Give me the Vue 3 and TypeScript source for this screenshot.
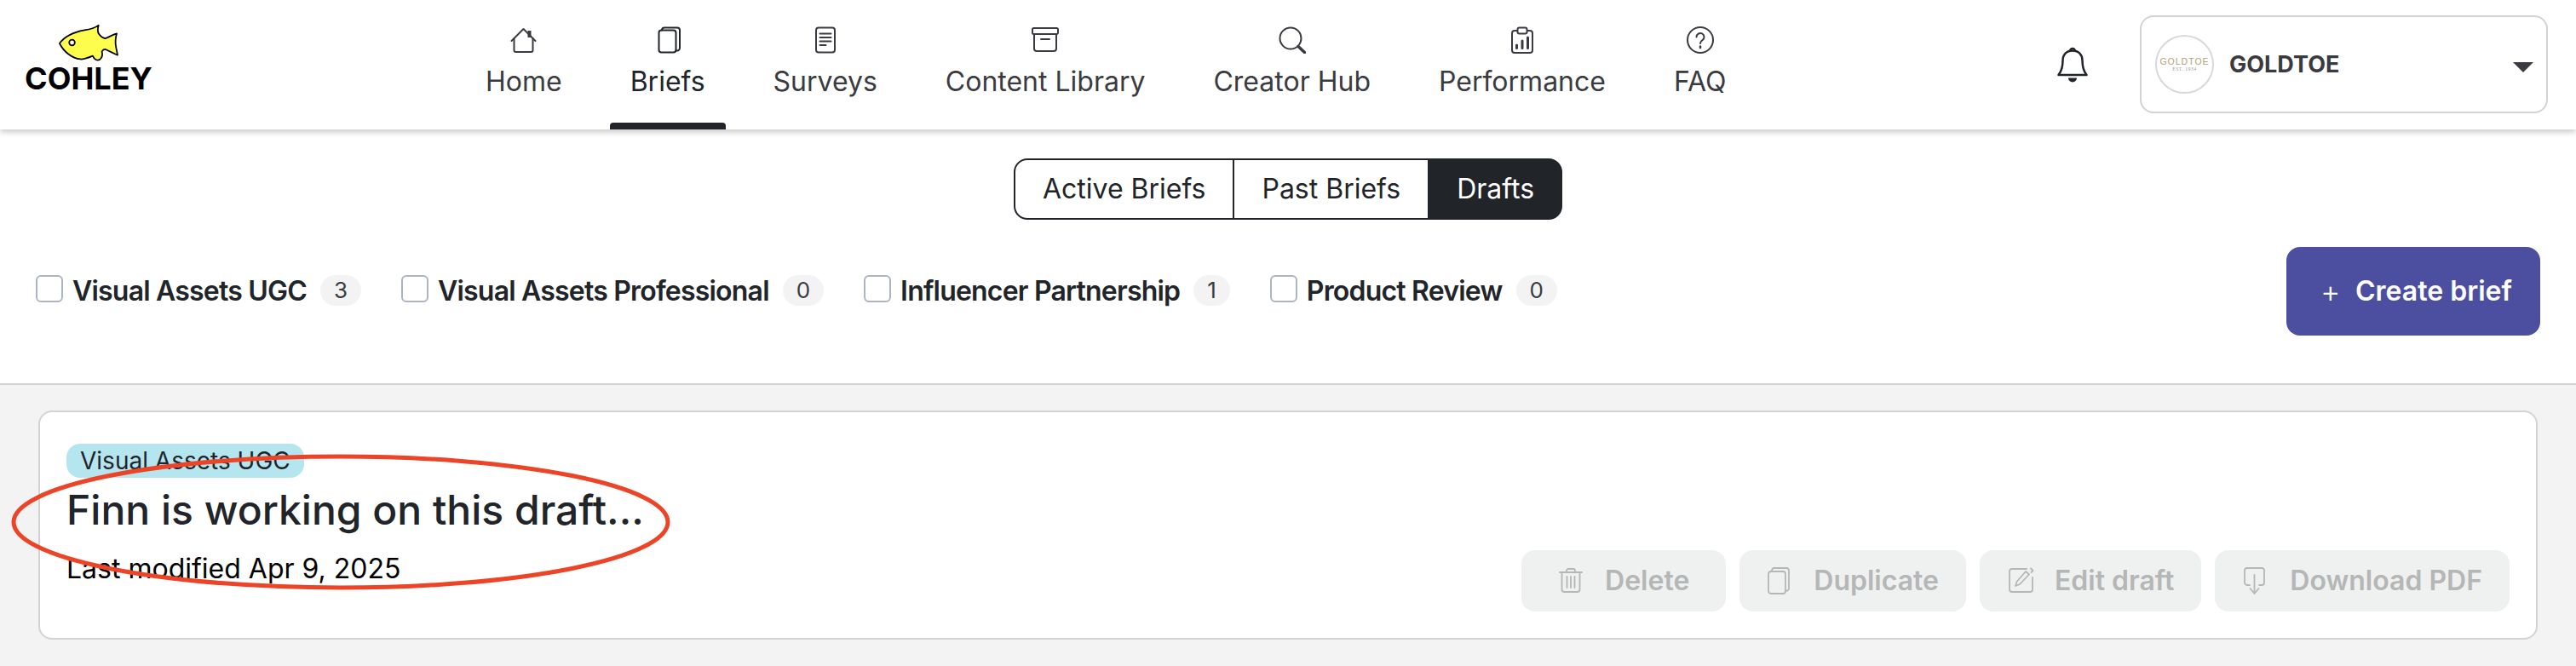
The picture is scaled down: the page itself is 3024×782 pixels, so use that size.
<script setup lang="ts">
interface IconPart { d: string; fill?: boolean; width?: number }
interface NavItem { label: string; active?: boolean; parts: IconPart[] }

const navItems: NavItem[] = [
  { label: 'Home', parts: [
    { d: 'M1.5 17 15.5 3l14 14' },
    { d: 'M4.5 14v14a2 2 0 0 0 2 2h18a2 2 0 0 0 2-2V14' },
    { d: 'M20.5 5h4v8h-4z', fill: true, width: 0 },
  ] },
  { label: 'Briefs', active: true, parts: [
    { d: 'M5.5 7.5a3 3 0 0 1 3-3h14a3 3 0 0 1 3 3v20a3 3 0 0 1-3 3h-14a3 3 0 0 1-3-3z' },
    { d: 'M9 4.5a3 3 0 0 1 3-3h15a3 3 0 0 1 3 3v21a3 3 0 0 1-4.5 2.5' },
  ] },
  { label: 'Surveys', parts: [
    { d: 'M5 4.5a3 3 0 0 1 3-3h16a3 3 0 0 1 3 3v23a3 3 0 0 1-3 3H8a3 3 0 0 1-3-3z' },
    { d: 'M9.5 8.5h13M9.5 13h13M9.5 17.5h13M9.5 22h7' },
  ] },
  { label: 'Content Library', parts: [
    { d: 'M2.5 2h27a1.5 1.5 0 0 1 1.5 1.5v4a1.5 1.5 0 0 1-1.5 1.5h-27A1.500 1.500 0 0 1 1 7.500v-4A1.500 1.500 0 0 1 2.500 2z' },
    { d: 'M3 9v17a3 3 0 0 0 3 3h20a3 3 0 0 0 3-3V9' },
    { d: 'M11 15h10' },
  ] },
  { label: 'Creator Hub', parts: [
    { d: 'M14 1.500a12.500 12.500 0 1 0 0 25 12.500 12.500 0 0 0 0-25z' },
    { d: 'M23 23.500l7.500 7', width: 3.5 },
  ] },
  { label: 'Performance', parts: [
    { d: 'M10 5H7a3 3 0 0 0-3 3v20a3 3 0 0 0 3 3h18a3 3 0 0 0 3-3V8a3 3 0 0 0-3-3h-3' },
    { d: 'M12.500 1.500h7a2 2 0 0 1 2 2v3a2 2 0 0 1-2 2h-7a2 2 0 0 1-2-2v-3a2 2 0 0 1 2-2z' },
    { d: 'M9.500 22v3.500M16 17v8.500M22.500 13v12.500', width: 3 },
  ] },
  { label: 'FAQ', parts: [
    { d: 'M16 1a15 15 0 1 0 0 30 15 15 0 0 0 0-30z' },
    { d: 'M11.500 12.500a4.500 4.500 0 1 1 7 3.700c-1.600 1-2.500 1.800-2.500 3.800' },
    { d: 'M16 23.500v1.500', width: 2.5 },
  ] },
]

const filters = [
  { label: 'Visual Assets UGC', count: 3 },
  { label: 'Visual Assets Professional', count: 0 },
  { label: 'Influencer Partnership', count: 1 },
  { label: 'Product Review', count: 0 },
]

const tabs = [
  { label: 'Active Briefs', active: false },
  { label: 'Past Briefs', active: false },
  { label: 'Drafts', active: true },
]

const actions: { label: string; cls: string; parts: string[] }[] = [
  { label: 'Delete', cls: 'del', parts: [
    'M1 6h26M9 6V4a2 2 0 0 1 2-2h6a2 2 0 0 1 2 2v2',
    'M3.500 6v20a3 3 0 0 0 3 3h15a3 3 0 0 0 3-3V6',
    'M9.500 11v13M14 11v13M18.500 11v13',
  ] },
  { label: 'Duplicate', cls: 'dup', parts: [
    'M1 8a3 3 0 0 1 3-3h14a3 3 0 0 1 3 3v20a3 3 0 0 1-3 3H4a3 3 0 0 1-3-3z',
    'M5 5V4a3 3 0 0 1 3-3h14a3 3 0 0 1 3 3v21a3 3 0 0 1-4 2.500',
  ] },
  { label: 'Edit draft', cls: 'edit', parts: [
    'M21 2H4a3 3 0 0 0-3 3v21a3 3 0 0 0 3 3h21a3 3 0 0 0 3-3V12',
    'M8 22l1.500-5L20 5l4 3.500L13 20z',
    'M26 1.500l2.500 2.500-2 2',
  ] },
  { label: 'Download PDF', cls: 'dl', parts: [
    'M7 21H4a3 3 0 0 1-3-3V4a3 3 0 0 1 3-3h17a3 3 0 0 1 3 3v14a3 3 0 0 1-3 3h-3',
    'M12.500 9v21M7.500 25l5 6 5-6',
  ] },
]
</script>

<template>
  <div class="page">
    <header class="topbar">
      <div class="logo">
        <svg class="fish" width="72" height="46" viewBox="68 28 74 46">
          <path d="M70 51C75 44 84 38 100 35C107 34 113 32 117 29C116 33 115.500 36 117 39C119 42 122 44.500 125 45C129 43.500 134 40.500 139 39C137.500 44 137 50 138 55C138.500 58 139.500 62 140 65C135 63 130 60.500 125 58C123.500 58 122 59 121 61C122 64 122 67 119 70C116 72.500 112 71 110 66C105 68 99 70.500 95 70C85 69 75 61 70 51Z" fill="#fdfd4e" stroke="#000" stroke-width="1.800" stroke-linejoin="round" />
          <circle cx="85" cy="50" r="3.400" fill="#fff" stroke="#000" stroke-width="1.800" />
        </svg>
        <span class="wordmark">COHLEY</span>
      </div>

      <nav class="nav">
        <a v-for="item in navItems" :key="item.label" class="nav-item" :class="{ active: item.active }">
          <svg width="32" height="32" viewBox="0 0 32 32" fill="none">
            <path
              v-for="part in item.parts"
              :key="part.d"
              :d="part.d"
              :fill="part.fill ? 'currentColor' : 'none'"
              stroke="currentColor"
              :stroke-width="part.width ?? 2"
              stroke-linecap="round"
              stroke-linejoin="round"
            />
          </svg>
          <span>{{ item.label }}</span>
        </a>
      </nav>

      <div class="account">
        <svg class="bell" width="36" height="42" viewBox="0 0 36 42" fill="none">
          <path d="M15 5a3 3 0 0 1 6 0" stroke="#212529" stroke-width="2.500" />
          <path d="M1.500 33C5.500 28 6.500 22 6.500 16C6.500 9 11 4.500 18 4.500C25 4.500 29.500 9 29.500 16C29.500 22 30.500 28 34.500 33Z" stroke="#212529" stroke-width="2.500" stroke-linejoin="round" />
          <path d="M13 36.500h10a5 5 0 0 1-10 0z" fill="#212529" />
        </svg>
        <div class="brand">
          <div class="avatar">
            <span class="avatar-name">GOLDTOE</span>
            <span class="avatar-est">EST. 1934</span>
          </div>
          <span class="brand-name">GOLDTOE</span>
          <svg class="caret" width="24" height="12" viewBox="0 0 24 12">
            <path d="M0 0h24L12 12z" fill="#3a3b40" />
          </svg>
        </div>
      </div>
    </header>

    <section class="controls">
      <div class="tabs">
        <button v-for="tab in tabs" :key="tab.label" class="tab" :class="{ on: tab.active }">{{ tab.label }}</button>
      </div>
      <div class="filter-row">
        <div class="filters">
          <label v-for="filter in filters" :key="filter.label" class="filter">
            <span class="check"></span>
            <span class="filter-label">{{ filter.label }}</span>
            <span class="count">{{ filter.count }}</span>
          </label>
        </div>
        <button class="create"><span class="plus">+</span><span>Create brief</span></button>
      </div>
    </section>

    <main class="content">
      <article class="card">
        <div class="card-text">
          <span class="chip">Visual Assets UGC</span>
          <h2 class="title">Finn is working on this draft...</h2>
          <p class="modified">Last modified Apr 9, 2025</p>
        </div>
        <div class="actions">
          <button v-for="action in actions" :key="action.label" class="action" :class="action.cls">
            <svg width="30" height="32" viewBox="0 0 30 32" fill="none">
              <path v-for="d in action.parts" :key="d" :d="d" stroke="currentColor" stroke-width="1.800" stroke-linecap="round" stroke-linejoin="round" />
            </svg>
            <span>{{ action.label }}</span>
          </button>
        </div>
      </article>
    </main>

    <svg class="annotation" width="800" height="170" viewBox="0 0 800 170" fill="none">
      <ellipse cx="400" cy="85" rx="384" ry="77" stroke="#ec4426" stroke-width="5" />
    </svg>
  </div>
</template>

<style>
html, body { margin: 0; padding: 0; background: #f3f3f3; }
</style>

<style scoped>
.page {
  position: relative;
  width: 3024px;
  min-height: 782px;
  background: #f3f3f3;
  font-family: Inter, "Liberation Sans", sans-serif;
  color: #212529;
  overflow: hidden;
}
.topbar {
  position: relative;
  z-index: 2;
  display: flex;
  align-items: flex-start;
  height: 152px;
  background: #fff;
  box-shadow: 0 3px 7px rgba(0, 0, 0, 0.22);
}
.logo {
  display: flex;
  flex-direction: column;
  align-items: center;
  width: 144px;
  margin: 28px 0 0 32px;
}
.wordmark {
  margin-top: 1px;
  font: 700 36px/34px Inter, sans-serif;
  color: #000;
  white-space: nowrap;
}
.nav {
  display: flex;
  gap: 80px;
  margin-left: 394px;
}
.nav-item {
  position: relative;
  display: flex;
  flex-direction: column;
  align-items: center;
  height: 152px;
  padding-top: 31px;
  box-sizing: border-box;
  color: #3a3b40;
  font-size: 32px;
  line-height: 44px;
  white-space: nowrap;
}
.nav-item svg { margin-bottom: 11px; }
.nav-item.active { color: #212529; }
.nav-item.active::after {
  content: "";
  position: absolute;
  left: -24px;
  right: -24px;
  bottom: 0;
  height: 8px;
  border-radius: 4px 4px 0 0;
  background: #212529;
}
.account {
  display: flex;
  align-items: flex-start;
  margin-left: auto;
  margin-right: 33px;
}
.bell { margin: 55px 61px 0 0; }
.brand {
  display: flex;
  align-items: center;
  width: 479px;
  height: 115px;
  margin-top: 18px;
  box-sizing: border-box;
  padding: 0 15px 0 16px;
  border: 2px solid #d3d3d3;
  border-radius: 16px;
}
.avatar {
  display: flex;
  flex-direction: column;
  align-items: center;
  justify-content: center;
  flex: none;
  width: 69px;
  height: 69px;
  box-sizing: border-box;
  border: 2px solid #d9d9d9;
  border-radius: 50%;
  overflow: hidden;
}
.avatar-name {
  font: 500 10.500px/12px "Liberation Sans", sans-serif;
  letter-spacing: 1px;
  color: #b2a179;
}
.avatar-est {
  font: 5.500px/7px "Liberation Serif", serif;
  letter-spacing: 0.600px;
  color: #9a9a9a;
}
.brand-name {
  margin: -1px 0 0 18px;
  font-size: 27px;
  font-weight: 700;
  color: #3a3b40;
}
.caret { margin: 6px 0 0 auto; }
.controls {
  display: flex;
  flex-direction: column;
  height: 300px;
  box-sizing: border-box;
  background: #fff;
  border-bottom: 2px solid #d3d3d3;
}
.tabs {
  display: flex;
  align-self: center;
  margin-top: 34px;
}
.tab {
  height: 72px;
  box-sizing: border-box;
  padding: 0 32px;
  border: 2px solid #212529;
  border-left-width: 0;
  background: #fff;
  color: #212529;
  font: 400 32px/1 Inter, sans-serif;
  white-space: nowrap;
}
.tab:first-child {
  border-left-width: 2px;
  border-radius: 16px 0 0 16px;
}
.tab:last-child {
  padding-right: 31px;
  border-radius: 0 16px 16px 0;
}
.tab.on {
  background: #212529;
  color: #fff;
}
.filter-row {
  display: flex;
  align-items: center;
  justify-content: space-between;
  margin-top: 32px;
  padding: 0 42px;
}
.filters {
  display: flex;
  align-items: center;
  gap: 47px;
  margin-top: -2px;
}
.filter {
  display: flex;
  align-items: center;
  white-space: nowrap;
}
.check {
  flex: none;
  width: 32px;
  height: 32px;
  box-sizing: border-box;
  margin: -4px 11px 0 0;
  border: 2px solid #adb5c3;
  border-radius: 6px;
  background: #fff;
}
.filter-label {
  font-size: 32px;
  font-weight: 600;
  letter-spacing: -0.800px;
  color: #212529;
}
.count {
  flex: none;
  height: 36px;
  margin-left: 16px;
  padding: 0 16px;
  box-sizing: border-box;
  border-radius: 18px;
  background: #f3f3f3;
  color: #3a3b40;
  font-size: 26px;
  line-height: 36px;
  text-align: center;
}
.create {
  display: flex;
  align-items: center;
  width: 298px;
  height: 104px;
  padding: 0 0 0 40px;
  box-sizing: border-box;
  border: 0;
  border-radius: 16px;
  background: #4c4f9f;
  color: #fff;
  font: 600 32px/1 Inter, sans-serif;
}
.plus {
  width: 41px;
  text-align: left;
  font-weight: 300;
  font-size: 36px;
}
.content {
  padding: 30px 45px 31px 45px;
}
.card {
  display: flex;
  justify-content: space-between;
  width: 2934px;
  height: 269px;
  box-sizing: border-box;
  padding: 37px 31px 31px 31px;
  border: 2px solid #d3d3d3;
  border-radius: 16px;
  background: #fff;
}
.card-text {
  display: flex;
  flex-direction: column;
  align-items: flex-start;
}
.chip {
  height: 40px;
  padding: 0 16px;
  border-radius: 16px;
  background: #b5e6f0;
  color: #212529;
  font-size: 28px;
  line-height: 40px;
  white-space: nowrap;
}
.title {
  margin: 6px 0 0;
  font-size: 48px;
  font-weight: 500;
  line-height: 64px;
  color: #212529;
  white-space: nowrap;
}
.modified {
  margin: 18px 0 0;
  font-size: 32px;
  line-height: 38px;
  color: #000;
  white-space: nowrap;
}
.actions {
  display: flex;
  align-self: flex-end;
  gap: 16px;
}
.action {
  display: flex;
  align-items: center;
  height: 72px;
  padding: 0 32px 0 34px;
  border: 0;
  border-radius: 16px;
  background: #eff0f0;
  color: #b5b6b6;
  font: 600 32px/1 Inter, sans-serif;
  white-space: nowrap;
}
.action.del { padding: 0 43px 0 44px; }
.action.dup { padding-left: 33px; }
.action svg { margin-right: 24px; }
.annotation {
  position: absolute;
  left: 0;
  top: 528px;
  z-index: 3;
  pointer-events: none;
}
</style>
